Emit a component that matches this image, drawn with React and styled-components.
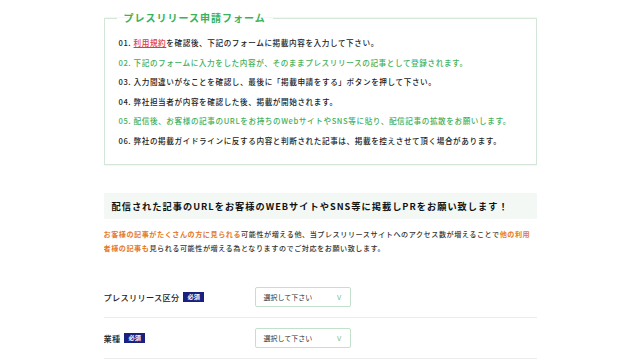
import React from 'react'
import styled, { createGlobalStyle } from 'styled-components'

const Global = createGlobalStyle`
    body {
        margin: 0;
        background: #fff;
        font-family: 'Noto Sans CJK JP', 'Noto Sans', sans-serif;
        color: #222;
    }
`
const Page = styled.div`
    width: 433px;
    margin: 0 auto;
    height: 360px;
    overflow: hidden;
`
const Box = styled.fieldset`
    margin: 12px 0 0;
    padding: 9px 14px 14px;
    border: 1px solid #d3e6d7;
    box-shadow: 0 0 2px rgba(120, 170, 130, 0.25);
`
const Legend = styled.legend`
    margin-left: -2px;
    padding: 0 7px;
    font-size: 10px;
    line-height: 12px;
    font-weight: 700;
    letter-spacing: 1px;
    color: #3bb15a;
`
const Steps = styled.ol`
    list-style: none;
    margin: 0;
    padding: 0;
`
const Step = styled.li`
    font-size: 7.6px;
    line-height: 19.5px;
    letter-spacing: 0.6px;
    font-weight: 500;
    white-space: nowrap;
    color: ${p => (p.$green ? '#3fb05c' : '#222')};
`
const Terms = styled.a`
    color: #e03a3f;
    text-decoration: underline;
`
const Banner = styled.div`
    margin-top: 28px;
    height: 26px;
    display: flex;
    align-items: center;
    padding-left: 8px;
    background: #f4f8f4;
    font-size: 9.2px;
    font-weight: 700;
    letter-spacing: 1.02px;
    color: #111;
`
const Note = styled.p`
    margin: 8px 0 0;
    font-size: 7.1px;
    line-height: 14px;
    letter-spacing: 0.55px;
    font-weight: 500;
    white-space: nowrap;
    color: #333;
`
const Hot = styled.span`
    color: #e57a28;
    font-weight: 700;
`
const Form = styled.div`
    margin-top: 22px;
`
const Row = styled.div`
    display: flex;
    align-items: center;
    height: 40px;
    border-bottom: 1px solid #ececec;
`
const Label = styled.div`
    width: 151px;
    display: flex;
    align-items: center;
    gap: 4px;
    font-size: 8.2px;
    letter-spacing: 0.3px;
    font-weight: 500;
    color: #222;
`
const Badge = styled.span`
    background: #1b1f7e;
    color: #fff;
    font-size: 6.2px;
    font-weight: 700;
    line-height: 10px;
    padding: 0 4px;
    letter-spacing: 0;
`
const Select = styled.div`
    width: 96px;
    height: 20px;
    box-sizing: border-box;
    border: 1px solid #c3e0ca;
    border-radius: 2px;
    display: flex;
    align-items: center;
    justify-content: space-between;
    padding: 0 8px 0 8px;
    font-size: 7px;
    color: #333;
`
const Chevron = styled.span`
    font-size: 8px;
    color: #8cc79b;
    font-family: 'DejaVu Sans', sans-serif;
`

const steps = [
    ['02. 下記のフォームに入力をした内容が、そのままプレスリリースの記事として登録されます。', true],
    ['03. 入力間違いがなことを確認し、最後に「掲載申請をする」ボタンを押して下さい。', false],
    ['04. 弊社担当者が内容を確認した後、掲載が開始されます。', false],
    ['05. 配信後、お客様の記事のURLをお持ちのWebサイトやSNS等に貼り、配信記事の拡散をお願いします。', true],
    ['06. 弊社の掲載ガイドラインに反する内容と判断された記事は、掲載を控えさせて頂く場合があります。', false],
]

function FieldRow({ label }) {
    return (
        <Row>
            <Label>
                {label} <Badge>必須</Badge>
            </Label>
            <Select>
                <span>選択して下さい</span>
                <Chevron>v</Chevron>
            </Select>
        </Row>
    )
}

export default function App() {
    return (
        <Page>
            <Global />
            <Box>
                <Legend>プレスリリース申請フォーム</Legend>
                <Steps>
                    <Step>
                        01. <Terms>利用規約</Terms>を確認後、下記のフォームに掲載内容を入力して下さい。
                    </Step>
                    {steps.map(([text, green]) => (
                        <Step key={text} $green={green}>{text}</Step>
                    ))}
                </Steps>
            </Box>
            <Banner>配信された記事のURLをお客様のWEBサイトやSNS等に掲載しPRをお願い致します！</Banner>
            <Note>
                <Hot>お客様の記事がたくさんの方に見られる</Hot>可能性が増える他、当プレスリリースサイトへのアクセス数が増えることで<Hot>他の利用</Hot>
                <br />
                <Hot>者様の記事も</Hot>見られる可能性が増える為となりますのでご対応をお願い致します。
            </Note>
            <Form>
                <FieldRow label="プレスリリース区分" />
                <FieldRow label="業種" />
            </Form>
        </Page>
    )
}
